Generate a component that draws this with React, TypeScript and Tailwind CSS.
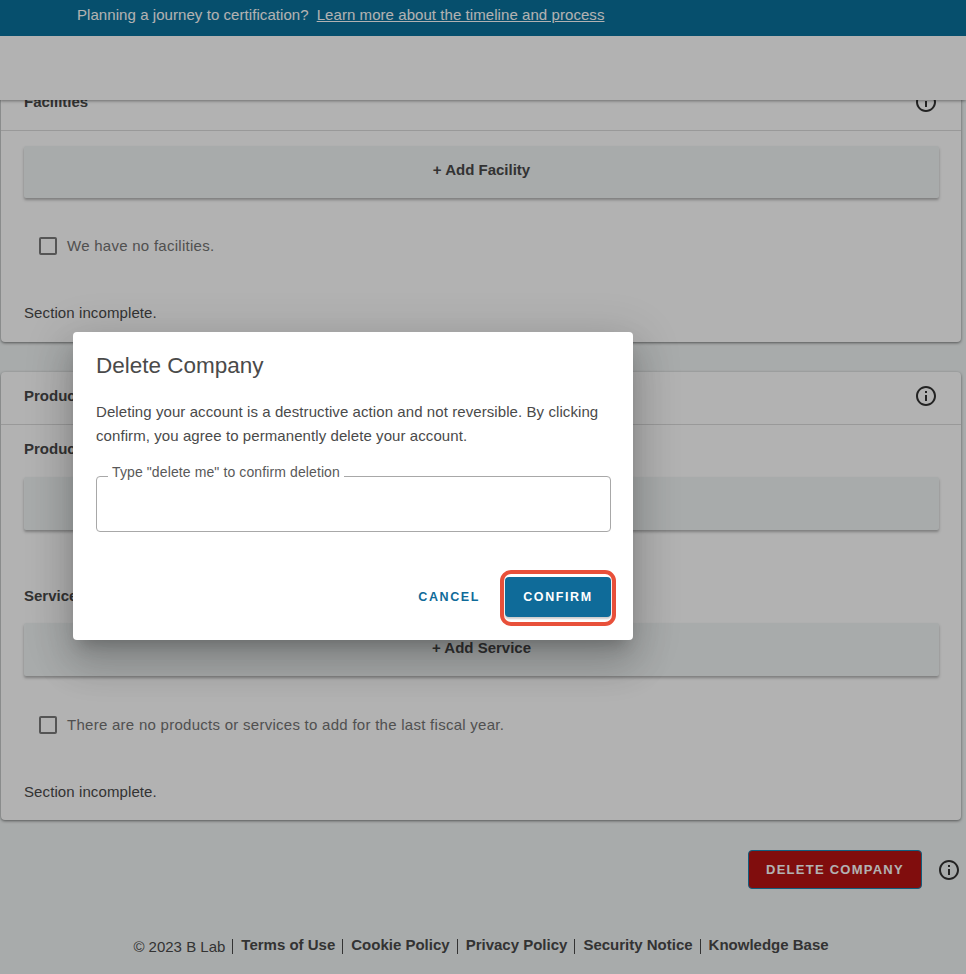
const sans = "font-['Liberation_Sans',Arial,sans-serif]";

function InfoIcon() {
  return (
    <svg viewBox="0 0 24 24" className="w-[24px] h-[24px] fill-[#333] shrink-0">
      <path d="M11 7h2v2h-2zm0 4h2v6h-2zm1-9C6.48 2 2 6.48 2 12s4.48 10 10 10 10-4.48 10-10S17.52 2 12 2zm0 18c-4.41 0-8-3.59-8-8s3.59-8 8-8 8 3.59 8 8-3.59 8-8 8z" />
    </svg>
  );
}

function AddButton({ label, short = false }: { label: string; short?: boolean }) {
  return (
    <button className={`w-full ${short ? "h-[52px] pb-[3px]" : "h-[53px] pb-[2px]"} bg-[#f1f5f5] rounded-[2px] shadow-[0_2px_3px_rgba(0,0,0,0.3)] text-[15px] font-bold text-[#4a4a4a]`}>
      {label}
    </button>
  );
}

function CheckRow({ label }: { label: string }) {
  return (
    <div className="flex items-center gap-[10px] pl-[15px]">
      <span className="w-[18px] h-[18px] border-2 border-[#7a7a7a] rounded-[2px]" />
      <span className="text-[15px] tracking-[0.27px] text-[#737373]">{label}</span>
    </div>
  );
}

function SectionHead({ title }: { title: string }) {
  return (
    <div className="h-[53px] pb-[4px] flex items-center justify-between pl-[23px] pr-[23px] border-b border-[#dcdcdc]">
      <span className="text-[15px] font-bold text-[#4a4a4a]">{title}</span>
      <InfoIcon />
    </div>
  );
}

function FooterLink({ label }: { label: string }) {
  return (
    <span className="font-bold border-l border-[#4a4a4a] pl-[8px] ml-[7px] leading-[15px] mt-[3px]">
      <span className="relative top-[-2px]">{label}</span>
    </span>
  );
}

export default function App() {
  return (
    <div className={`${sans} relative w-[966px] h-[974px] overflow-hidden bg-[#f1f5f5] text-[#4a4a4a]`}>
      <div className="relative z-20 h-[36px] bg-[#0a729c] text-white text-[15px] tracking-[0.065px] pl-[77px] pt-[4px] flex gap-[8px]">
        <span>Planning a journey to certification?</span>
        <span className="underline">Learn more about the timeline and process</span>
      </div>
      <div className="relative z-10 h-[64px] bg-white shadow-[0_1px_3px_rgba(0,0,0,0.4)]" />

      <div className="mx-[1px] w-[960px] -mt-[22px] bg-white rounded-[4px] shadow-[0_1px_3px_rgba(0,0,0,0.5)] h-[264px]">
        <SectionHead title="Facilities" />
        <div className="pl-[23px] pr-[22px] pt-[15px]">
          <AddButton label="+ Add Facility" short />
          <div className="mt-[37px]"><CheckRow label="We have no facilities." /></div>
          <p className="mt-[44px] text-[15px] tracking-[0.1px]">Section incomplete.</p>
        </div>
      </div>

      <div className="mx-[1px] w-[960px] mt-[30px] bg-white rounded-[4px] shadow-[0_1px_3px_rgba(0,0,0,0.5)] h-[448px]">
        <SectionHead title="Products and Services" />
        <div className="pl-[23px] pr-[22px] pt-[15px]">
          <p className="text-[15px] font-bold leading-[18px]">Products</p>
          <div className="mt-[19px]"><AddButton label="+ Add Product" /></div>
          <p className="mt-[57px] text-[15px] font-bold leading-[18px]">Services</p>
          <div className="mt-[18px]"><AddButton label="+ Add Service" /></div>
          <div className="mt-[38px]"><CheckRow label="There are no products or services to add for the last fiscal year." /></div>
          <p className="mt-[44px] text-[15px] tracking-[0.1px]">Section incomplete.</p>
        </div>
      </div>

      <div className="flex justify-end items-center gap-[15px] pr-[5px] mt-[30px]">
        <button className="w-[174px] h-[39px] bg-[#b81414] border border-[#1787b5] rounded-[4px] text-white font-bold text-[13px] tracking-[1.25px]">
          DELETE COMPANY
        </button>
        <InfoIcon />
      </div>

      <div className="flex justify-center items-start mt-[47px] text-[15px] pr-[4px]">
        <span>© 2023 B Lab</span>
        <FooterLink label="Terms of Use" />
        <FooterLink label="Cookie Policy" />
        <FooterLink label="Privacy Policy" />
        <FooterLink label="Security Notice" />
        <FooterLink label="Knowledge Base" />
      </div>

      {/* dialog backdrop */}
      <div className="absolute inset-0 z-30 bg-black/30" />

      <div className="absolute z-40 left-[73px] top-[332px] w-[560px] h-[308px] bg-white rounded-[4px] shadow-[0_11px_15px_-7px_rgba(0,0,0,0.2),0_24px_38px_3px_rgba(0,0,0,0.14),0_9px_46px_8px_rgba(0,0,0,0.12)] pl-[23px] pr-[22px] pt-[21px]">
        <h2 className="text-[22.5px] leading-[26px] text-[#4a4a4a]">Delete Company</h2>
        <p className="mt-[21px] text-[15px] tracking-[0.08px] leading-[24px] text-[#4a4a4a]">
          Deleting your account is a destructive action and not reversible. By clicking confirm, you agree to permanently delete your account.
        </p>
        <div className="relative mt-[28px] h-[56px] border border-[#a8a8a8] rounded-[4px]">
          <span className="absolute left-[11px] -top-[14px] bg-white px-[4px] text-[14px] tracking-[0.11px] leading-[18px] text-[#595959]">
            Type "delete me" to confirm deletion
          </span>
        </div>
        <div className="relative flex justify-end items-center gap-[25px] mt-[45px]">
          <button className="text-[12.5px] font-bold tracking-[1.6px] text-[#0f6b99]">CANCEL</button>
          <button className="w-[106px] h-[40px] bg-[#0f6b99] rounded-[4px] shadow-[0_2px_2px_rgba(0,0,0,0.2)] text-white text-[12.5px] font-bold tracking-[1.6px]">
            CONFIRM
          </button>
          <div className="absolute -right-[5px] -top-[7px] w-[116px] h-[56px] border-[4px] border-[#e8503a] rounded-[11px]" />
        </div>
      </div>
    </div>
  );
}
